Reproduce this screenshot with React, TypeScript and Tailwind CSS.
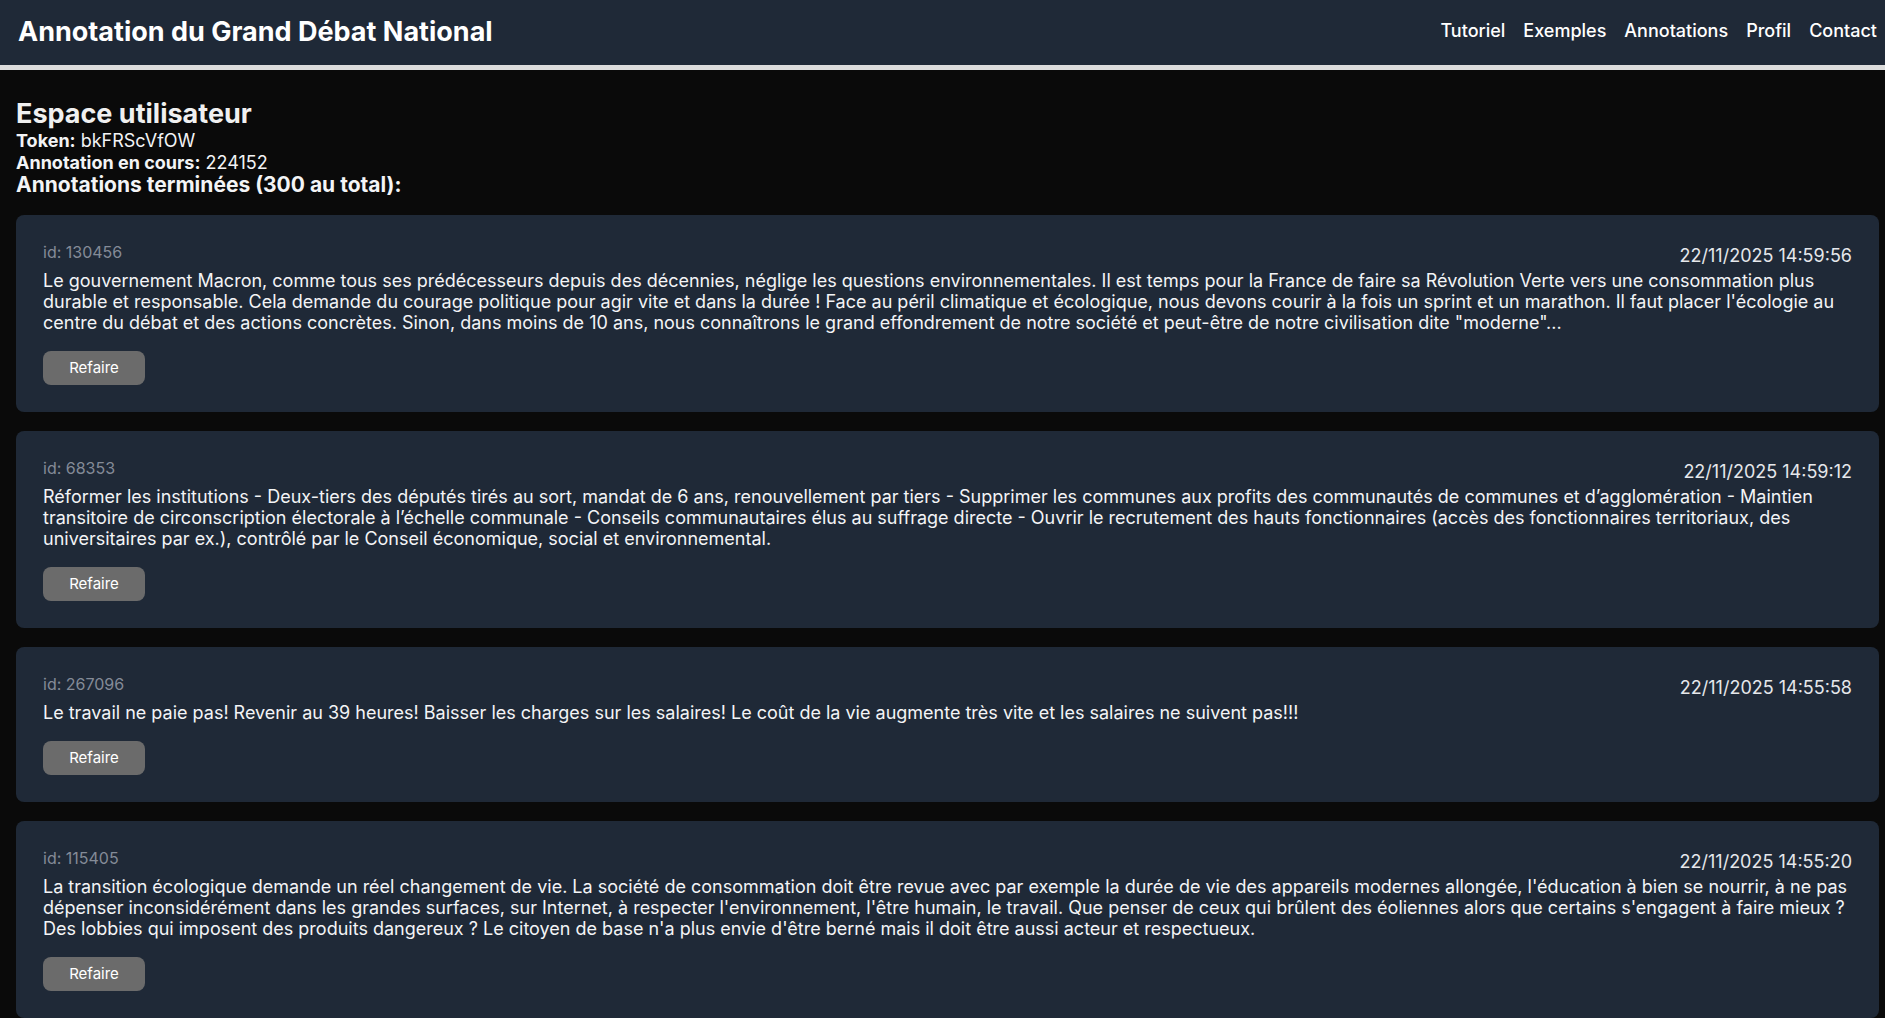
import React from "react";

const items = [
  {
    id: "130456",
    date: "22/11/2025 14:59:56",
    text: "Le gouvernement Macron, comme tous ses prédécesseurs depuis des décennies, néglige les questions environnementales. Il est temps pour la France de faire sa Révolution Verte vers une consommation plus durable et responsable. Cela demande du courage politique pour agir vite et dans la durée ! Face au péril climatique et écologique, nous devons courir à la fois un sprint et un marathon. Il faut placer l'écologie au centre du débat et des actions concrètes. Sinon, dans moins de 10 ans, nous connaîtrons le grand effondrement de notre société et peut-être de notre civilisation dite \"moderne\"...",
  },
  {
    id: "68353",
    date: "22/11/2025 14:59:12",
    text: "Réformer les institutions - Deux-tiers des députés tirés au sort, mandat de 6 ans, renouvellement par tiers - Supprimer les communes aux profits des communautés de communes et d’agglomération - Maintien transitoire de circonscription électorale à l’échelle communale - Conseils communautaires élus au suffrage directe - Ouvrir le recrutement des hauts fonctionnaires (accès des fonctionnaires territoriaux, des universitaires par ex.), contrôlé par le Conseil économique, social et environnemental.",
  },
  {
    id: "267096",
    date: "22/11/2025 14:55:58",
    text: "Le travail ne paie pas! Revenir au 39 heures! Baisser les charges sur les salaires! Le coût de la vie augmente très vite et les salaires ne suivent pas!!!",
  },
  {
    id: "115405",
    date: "22/11/2025 14:55:20",
    text: "La transition écologique demande un réel changement de vie. La société de consommation doit être revue avec par exemple la durée de vie des appareils modernes allongée, l'éducation à bien se nourrir, à ne pas dépenser inconsidérément dans les grandes surfaces, sur Internet, à respecter l'environnement, l'être humain, le travail. Que penser de ceux qui brûlent des éoliennes alors que certains s'engagent à faire mieux ? Des lobbies qui imposent des produits dangereux ? Le citoyen de base n'a plus envie d'être berné mais il doit être aussi acteur et respectueux.",
  },
];

export default function App() {
  return (
    <div className="min-h-screen bg-[#0a0a0a] font-['Inter','Noto_Sans',sans-serif] text-[#f3f4f6]">
      <header className="box-content flex h-[62px] items-center justify-between border-b-[5px] border-[#dcdcdc] bg-[#1f2937] pb-[3px] pl-[18px]">
        <h1 className="text-[27px] font-bold leading-[33px] text-white">Annotation du Grand Débat National</h1>
        <nav className="flex items-center gap-[2px] text-[18px] font-medium leading-[28px] text-white">
          <a className="px-2">Tutoriel</a>
          <a className="px-2">Exemples</a>
          <a className="px-2">Annotations</a>
          <a className="px-2">Profil</a>
          <a className="px-2">Contact</a>
        </nav>
      </header>
      <main className="pl-4 pr-[6px] pt-[28px]">
        <h2 className="text-[27px] font-bold leading-[32px] text-[#f0f0f0]">Espace utilisateur</h2>
        <p className="text-[18px] leading-[22px]">
          <span className="font-bold">Token:</span> bkFRScVfOW
        </p>
        <p className="text-[18px] leading-[22px]">
          <span className="font-bold">Annotation en cours:</span> 224152
        </p>
        <h3 className="text-[21px] font-bold leading-[22px]">Annotations terminées (300 au total):</h3>
        <div className="mt-[19px] flex flex-col gap-[19px]">
          {items.map((it) => (
            <div key={it.id} className="rounded-lg bg-[#1f2937] p-[27px]">
              <div className="flex items-start justify-between">
                <span className="text-[16px] leading-[20px] text-[#848b97]">id: {it.id}</span>
                <span className="text-[18px] leading-[28px] text-[#e5e7eb]">{it.date}</span>
              </div>
              <p className="text-[18px] leading-[21px] text-[#f3f4f6]">{it.text}</p>
              <button className="mt-[18px] h-[34px] w-[102px] rounded-lg bg-[#6b6b6b] text-[15px] text-white">
                Refaire
              </button>
            </div>
          ))}
        </div>
      </main>
    </div>
  );
}
